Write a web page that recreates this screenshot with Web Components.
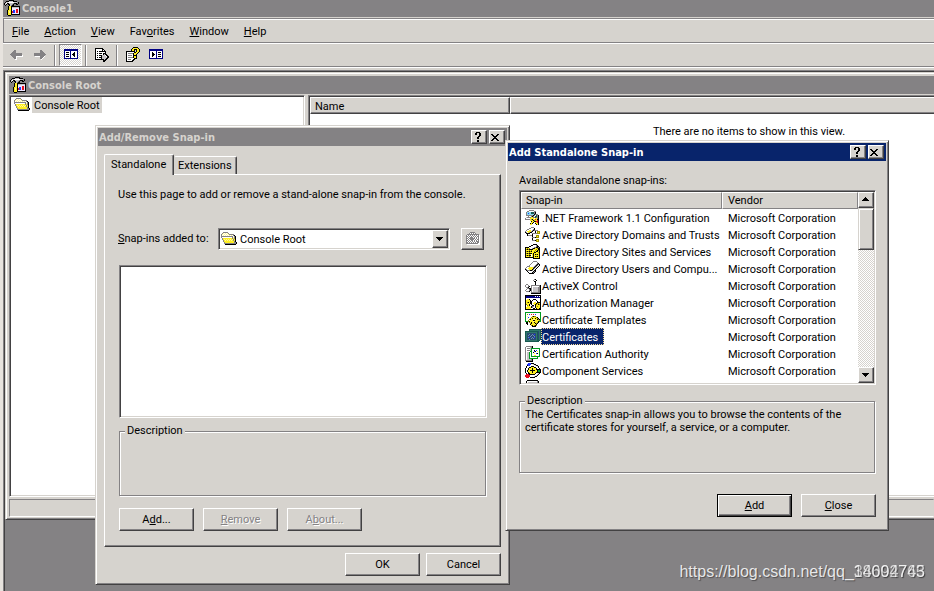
<!DOCTYPE html>
<html lang="en">
<head>
<meta charset="utf-8">
<title>Console1</title>
<style>
  html, body { margin: 0; height: 100%; overflow: hidden; }
  body {
    --face: #d6d3ce; --shade: #848284; --dark: #424142; --navy: #08246b;
    --title-font: bold 11px/16px "DejaVu Sans Condensed", "DejaVu Sans", sans-serif;
    font: 11px/14px Roboto, "Liberation Sans", sans-serif;
    color: #000; background: var(--shade);
  }
</style>
</head>
<body>
<management-console></management-console>

<script>
const PALETTE = { k:'#000', d:'#424142', g:'#848284', l:'#c6c3c6', w:'#fff', y:'#ffef21', o:'#9c9200', b:'#000084',
  B:'#2138ff', r:'#e71021', R:'#840000', G:'#009a21', t:'#185a52', c:'#84d7ef', n:'#294973', p:'#fff79c', v:'#efe7ff',
  e:'#31756b', s:'#6b8eb5' };

const ICONS = {
mmc: `
.....kkkkk......
..kkkllllkkkk...
.kllwwwwwwlllgk.
klwkkllllgkkkgk.
klk.kkllgk..kk..
.k...klgkk......
....kyykkkkkkkkk
....kyyklllllllk
....kyykvvvvvvvk
....kyykvvvvrrvk
...kyyykvBBvrrvk
...kypykrBBvrrvk
...kypykrBBvrrvk
...kyyykvvvvvvvk
...kyyykkkkkkkkk
....kkk.........`,
folder: `
................
..ggggg.........
.gpwpwpg........
gpwpwpwpggggg...
gwpwpwpwpwpwgk..
ggggggggggggwgk.
gwwwwwwwwwwgpgk.
.gyyyyyyyyygygk.
.gypypypypypgyk.
..gypypypypygyk.
..gyyyyyyyyyygk.
...gyyyyyyyyyggk
...ggggggggggggk
....kkkkkkkkkkk.
................
................`,
folderOff: `
................
.....ggggg......
....gwgwgwg.....
..gggggggggggg..
.gwgwgwgwgwgwgw.
.ggwgwgwgwgwggw.
.gwgwgggwgwgwgw.
.ggwggggggwgwgw.
.gwgwggggwgwggw.
.ggwgwggwgwgwgw.
.gwgwgwgwgwgggw.
.ggwgwgwgwgwggw.
.ggggggggggggww.
..wwwwwwwwwwwww.
................
................`,
back: `
................
................
................
.....gg.........
....ggg.........
...gggg.........
..ggggggggggg...
.gggggggggggg...
..gggggggggggw..
...ggggwwwwwww..
....gggw........
.....ggw........
......ww........
................
................
................`,
forward: `
................
................
................
........gg......
........ggg.....
........gggg....
..ggggggggggg...
..gggggggggggg..
..ggggggggggg...
...wwwwwggggw...
........gggw....
........ggw.....
.........w......
................
................
................`,
tree: `
................
................
.bbbbbbbbbbbbbb.
.bbbbbbbbbbbbbb.
.bwwwwwbwwwwwwb.
.bwkkkwbwwwkwwb.
.bwwwwwbwwkkwwb.
.bwkkkwbwkkkwwb.
.bwwwwwbwwkkwwb.
.bwkkkwbwwwkwwb.
.bwwwwwbwwwwwwb.
.bbbbbbbbbbbbbb.
................
................
................
................`,
action: `
................
................
.bbbbbbbbbbbbbb.
.bbbbbbbbbbbbbb.
.bwwwwwwbwwwwwb.
.bwwkwwwbwkkkwb.
.bwwkkwwbwwwwwb.
.bwwkkkwbwkkkwb.
.bwwkkwwbwwwwwb.
.bwwkwwwbwkkkwb.
.bwwwwwwbwwwwwb.
.bbbbbbbbbbbbbb.
................
................
................
................`,
exportList: `
................
.kkkkkkkk.......
.kwwwwwwkk......
.kwwwwwwkwk.....
.kwkwkkkkkkk....
.kwwwwwwwwwk....
.kwkwkkkwkkk....
.kwwwwwwwklkk...
.kwkwkkklllwkk..
.kwwwwwkllllwkk.
.kwkwkkklllllkk.
.kwwwwwkllllkk..
.kkkkkkkkklkk...
.........kkk....
.........kk.....
................`,
help: `
........kkkkk...
.......kyyyyyk..
......kyykkkyyk.
......kyyk.kyyk.
.kkkkkkkkk.kyyk.
.kwwwwwwwkkyyk..
.kwgggggkyyyk...
.kwwwwwwkyyk....
.kwggggwkkkk....
.kwwwwwwkyyk....
.kwgggggkyyk....
.kwwwwwwwkkk....
.kwgggwwkk......
.kwwwwwkk.......
.kkkkkkk........
................`,
net: `
....ggggg.......
..ggwwwwwgg.....
.gcccctttgk.....
.gcBcctttgk.....
.gccccccckggg...
.gggggggkgwtgk..
...gwwgkgwttgk..
.lggggyyggtggk..
gwwwwyyyywyygk..
gggggygkyyrykk..
.....yyykgyyrk..
......kyykkrrk..
......yyk.yyrk..
.....kyk..kyyk..
.....yy....kyk..
................`,
domains: `
......ggg.......
....ggwwwk......
..ggwwwwgk......
.gwwyywgkgggg...
gwyyyygk..k.ooo.
kgwygkk...k.oyo.
.kkkk..gggggooo.
..k....k........
..kggggk...ooo..
.......k...oyo..
.......gggkooo..
.......k........
.......k...ooo..
.......gggkoyo..
...........ooo..
................`,
sites: `
........kkkk....
......kkwwwgk...
....kkwwwwwgkk..
kkkkwwwwwggkkgk.
kyoyowwgkkyyokk.
kokokkkkyyyoykk.
kyyyoyoyyyoykok.
kokokokyyoykkyk.
kyyyoyyyykkyyok.
kokokkkykyyyyyk.
kyyyoywykykokyk.
kokokkwykyyyyyk.
kyyyoywykykokyk.
kkkkkkkkkyyyyyk.
........kkkkkkk.
................`,
users: `
........gggg....
.......gwwwwg...
......gwwwwwgk..
.....gwwwwwgkgk.
....gwwwwwgkgwk.
..gggwwwwgkgwk..
.gwwyyyygkgwk...
gwwyyyyykgwk....
kgwwyyykgwk.....
.kgggkkgwkk.....
..kwwwwwkgk.....
...kwwwkgk......
....kkkkk.......
................
................
................`,
activex: `
................
.........gk.....
........gwwk....
.........kk.....
..........k.....
..........k.....
.gg.......k.....
gwwg..gggggggggk
g.wgk.gwwwwwwwgk
.ggk..gwlllllggk
..ggkkgwlllllggk
.gwwgkgwlllllggk
gw.wgkgwlllllggk
.gggk.gwlllllggk
......gggggggggk
......kkkkkkkkkk`,
auth: `
kkkkkkkkkkkkkkkk
kbbbbbbbbbwbwbwk
kbbbbbbbbbbbbbbk
kwwwwwwwwwwwwwwk
kwyykwwwkkkwwwwk
kyyyykwkwwwkwwwk
kyyyykkwwwwwkwwk
kyokykkwwyywkkkk
kyyyykkwyyykooyk
koyykwkwwykoykok
kwoykwwkkwkyyyyk
kwyyywkggwkyoyyk
kyyyyykgwwkyyyyk
kyyyyywwkkwkyykk
kkkkkkkkkkkkkkkk
................`,
template: `
GGGGGGGGGGGGGGGG
GwwwwwwwwwwwwwwG
GwowBwrwrwBwwwwG
GwwwwwwwwwwwwwwG
GwpwwwwokoowwwwG
GwwBwwoyyyyokwwG
GwpwwoykyykyokwG
GwwwokyyppyykokG
GwwowyyykkyyyyoG
GGGokyyypyyyykGG
.kkwoykyykyyok..
.kkwwokyyykok...
..k..kyyyyyk....
......okyoko....
.......kkkk.....
................`,
cert: `
....tttttttttttt
....teeeeeeeeeet
tttttttttttttnet
teeeeeeeeeeetnet
tennnnnnnnnetnet
tennsnnsnBnetnet
tensnnsnsnnetnet
tennnsnnnsnetnet
tensBnnsnBnetnet
tennnnsnsnnetnet
tennsnnnnnnettet
teeeeeeeeeeettt.
tttttttttttttt..
................
................
................`,
ca: `
.ggggggk........
gwwwwlgk........
gwggglGGGGGGGGG.
gwwwwlGwwwwwwwG.
gwggglGwwkwBwwG.
gwwwwGGwwBkwywG.
gwllGwGwkwwwwwG.
gwllGwGwwywBkwG.
gwllGwGwwwwwwwG.
gwllGwGwwyywwwG.
gwllGwGGGGGGGGG.
gwllGwwwwwwwG...
gwllGGGGGGGGG...
gwllllgk........
gggggggk........
.kkkkkkk........`,
com: `
...BBBkkk.......
..BBBBwwlkk.....
..kBBwwwwwlkk...
.kwwwwkkkwwwlk..
.kwwkkyyykkwwk..
kwwkyyykyyykwwk.
kwwkyyykyyykkkkk
kwkyykkkkkyykGGk
kwkyyyykyyyykGGk
kwwkyyykyyykkkkk
.kwkkyyyyykwwlk.
.rrrkkkkkkwwlk..
rrrrrwwwwwwlk...
rrrrrwwwwlkk....
.rrr.kkkkk......
................`,
disk: `
..kkkkkkkkkkk...
.kwwwwwwwwwwgk..
.kwlllllllllgk..
.kggkkkkkkkggk..
.kwlllllllllgk..`,
question: `
................
......kkkk......
.....kk..kk.....
.....kk..kk.....
.........kk.....
........kk......
.......kk.......
.......kk.......
................
.......kk.......
.......kk.......`,
close: `
................
................
................
...kk....kk.....
....kk..kk......
.....kkkk.......
......kk........
.....kkkk.......
....kk..kk......
...kk....kk.....`,
down: `
................
................
................
................
................
................
....kkkkkkk.....
.....kkkkk......
......kkk.......
.......k........`,
up: `
................
................
................
................
................
.......k........
......kkk.......
.....kkkkk......
....kkkkkkk.....`
};

function pixelIcon(name) {
  const rows = ICONS[name].trim().split('\n');
  let out = '';
  rows.forEach((row, y) => {
    for (let x = 0; x < row.length;) {
      let n = 1;
      while (row[x + n] === row[x]) n++;
      if (PALETTE[row[x]]) out += `<rect x="${x}" y="${y}" width="${n}" height="1" fill="${PALETTE[row[x]]}"/>`;
      x += n;
    }
  });
  return `<svg viewBox="0 0 16 16" width="16" height="16" shape-rendering="crispEdges" aria-hidden="true">${out}</svg>`;
}

class Part extends HTMLElement {
  connectedCallback() {
    if (this.shadowRoot) return;
    const root = this.attachShadow({ mode: 'open' });
    root.innerHTML = `<style>*{box-sizing:border-box}:host{display:block;box-sizing:border-box}${this.css || ''}</style>${this.html()}`;
  }
}
const define = (name, css, html) => customElements.define(name, class extends Part {
  get css() { return css; }
  html() { return html(this); }
});

define('px-icon', `:host{width:16px;height:16px;flex:none} svg{display:block}`, el => pixelIcon(el.getAttribute('name')));

define('push-button', `
  :host{width:75px;height:23px;flex:none}
  button{display:flex;align-items:center;justify-content:center;width:100%;height:100%;margin:0;padding:0;font:inherit;color:#000;
    background:var(--face);border:1px solid;border-color:#fff var(--dark) var(--dark) #fff;box-shadow:inset -1px -1px var(--shade)}
  :host([default]) button{border-color:#000;box-shadow:inset 1px 1px #fff,inset -1px -1px var(--dark),inset -2px -2px var(--shade)}
  button:disabled{color:var(--shade);text-shadow:1px 1px #fff}
  :host([small]){width:16px;height:14px}
  :host([square]){width:16px;height:16px}
  :host([tool]){width:23px;height:22px}
  :host([small]) button{align-items:flex-start;overflow:hidden}
  ::slotted(px-icon){flex:none}`,
  el => `<button type="button" ${el.hasAttribute('disabled') ? 'disabled' : ''} aria-label="${el.getAttribute('label') || ''}"><span><slot></slot></span></button>`
    .replace(' aria-label=""', ''));

define('title-bar', `
  :host{height:18px;background:var(--bar,var(--shade));color:var(--bar-text,var(--face))}
  header{display:flex;align-items:center;height:100%;padding:0 2px 0 1px;font:var(--title-font)}
  h1{flex:1;margin:0;padding-top:2px;font:inherit}
  px-icon{margin-right:2px}
  push-button+push-button{margin-left:2px}`,
  el => `<header>${el.hasAttribute('icon') ? `<px-icon name="${el.getAttribute('icon')}"></px-icon>` : ''}<h1><slot></slot></h1>${
    el.hasAttribute('buttons') ? '<push-button small label="Help"><px-icon name="question"></px-icon></push-button><push-button small label="Close"><px-icon name="close"></px-icon></push-button>' : ''}</header>`);

define('dialog-window', `
  :host{position:absolute;background:var(--face);border:1px solid;border-color:var(--face) var(--dark) var(--dark) var(--face);
    box-shadow:inset 1px 1px #fff,inset -1px -1px var(--shade);padding:2px}
  :host([active]){--bar:var(--navy);--bar-text:#fff}`,
  el => `<title-bar buttons>${el.getAttribute('heading')}</title-bar><slot></slot>`);

define('group-box', `
  :host{padding:0 1px 1px 0}
  fieldset{height:100%;margin:0;padding:0 5px;border:1px solid var(--shade);box-shadow:1px 1px #fff,inset 1px 1px #fff;min-width:0}
  legend{padding:0 2px;line-height:14px;background:var(--face)}
  p{margin:0;line-height:13px}`,
  () => `<fieldset><legend>Description</legend><p><slot></slot></p></fieldset>`);

define('menu-bar', `
  nav{display:flex;gap:15px;height:23px;padding:0 8px;align-items:center;border-top:1px solid #fff}
  button{font:inherit;color:#000;background:none;border:0;padding:2px 0 0}`,
  () => `<nav><button><u>F</u>ile</button><button><u>A</u>ction</button><button><u>V</u>iew</button><button>Fav<u>o</u>rites</button><button><u>W</u>indow</button><button><u>H</u>elp</button></nav>`);

define('tool-bar', `
  div{display:flex;align-items:flex-end;height:25px;padding-left:2px;border:solid;border-width:1px 0;border-color:var(--shade);box-shadow:inset 0 1px #fff}
  button{display:flex;align-items:center;justify-content:center;width:23px;height:22px;padding:0;background:none;border:1px solid transparent}
  .on{background:repeating-conic-gradient(#fff 0 25%,var(--face) 0 50%) 0 0/2px 2px;border-color:var(--shade) #fff #fff var(--shade)}
  i{width:2px;height:21px;margin:0 3px;background:linear-gradient(90deg,var(--shade) 50%,#fff 50%)}`,
  () => {
    const b = (n, l, c = '') => `<button class="${c}" aria-label="${l}"><px-icon name="${n}"></px-icon></button>`;
    return `<div>${b('back','Back')}${b('forward','Forward')}<i></i>${b('tree','Show console tree','on')}<i></i>${b('exportList','Export list')}<i></i>${b('help','Help')}${b('action','Show action pane')}</div>`;
  });

define('child-window', `
  :host{display:flex;flex-direction:column;flex:1;min-height:0;padding:3px 0 1px 3px;background:var(--face);border-left:1px solid var(--face);
    border-top:1px solid var(--face);border-bottom:1px solid var(--dark);box-shadow:inset 1px 1px #fff,inset 0 -1px var(--shade)}
  .panes{display:flex;flex:1;min-height:0;gap:3px;padding-top:1px}
  .pane{background:#fff;border:1px solid;border-color:var(--shade) #fff #fff var(--shade);box-shadow:inset 1px 1px var(--dark),inset -1px -1px var(--face)}
  .tree{flex:0 0 296px;padding:1px 4px}
  .items{flex:1;border-right:0;padding:1px 0 0 1px;box-shadow:inset 1px 1px var(--dark),inset 0 -1px var(--face)}
  ul{margin:0;padding:0;list-style:none}
  li{display:flex;align-items:center;gap:2px;height:16px}
  li span{background:var(--face);padding:2px 2px 0}
  table{width:100%;border-collapse:separate;border-spacing:0}
  th{height:17px;padding:1px 4px 0;line-height:13px;text-align:left;font-weight:normal;background:var(--face);border:1px solid;border-color:#fff var(--dark) var(--dark) #fff;box-shadow:inset -1px -1px var(--shade)}
  th:first-child{width:200px}
  th:last-child{border-right:0;box-shadow:inset 0 -1px var(--shade)}
  td{padding:11px 0 0;text-align:center}
  td span{padding-left:254px}
  .status{height:18px;margin:2px 0 1px;border:1px solid;border-color:var(--shade) transparent #fff var(--shade)}`,
  () => `<title-bar icon="mmc">Console Root</title-bar>
    <div class="panes"><div class="pane tree"><ul><li><px-icon name="folder"></px-icon><span>Console Root</span></li></ul></div>
    <div class="pane items"><table><thead><tr><th>Name</th><th></th></tr></thead><tbody><tr><td colspan="2"><span>There are no items to show in this view.</span></td></tr></tbody></table></div></div>
    <div class="status"></div>`);

define('tab-panel', `
  .tabs{display:flex;align-items:flex-end;height:20px}
  .tabs button{position:relative;width:63px;height:18px;padding:0 0 0 3px;font:inherit;color:#000;background:var(--face);border:1px solid;border-color:#fff var(--dark) transparent transparent;border-bottom:0;
    border-radius:2px 2px 0 0;box-shadow:inset -1px 0 var(--shade);text-align:left}
  .tabs button[aria-selected=true]{width:70px;height:21px;margin-bottom:-1px;padding:0 0 0 6px;border-left-color:#fff}
  .panel{padding:13px 13px 15px 14px;border:1px solid;border-color:#fff var(--dark) var(--dark) #fff;box-shadow:inset -1px -1px var(--shade)}`,
  () => `<div class="tabs" role="tablist"><button role="tab" aria-selected="true">Standalone</button><button role="tab" aria-selected="false">Extensions</button></div><div class="panel" role="tabpanel"><slot></slot></div>`);

define('folder-select', `
  :host{display:flex;align-items:center}
  label{flex:0 0 100px;margin-left:-1px}
  .box{position:relative;flex:1;height:22px}
  select{appearance:none;width:100%;height:100%;margin:0;padding:2px 20px 0 21px;font:inherit;color:#000;background:#fff;border:1px solid;border-color:var(--shade) #fff #fff var(--shade);border-radius:0;
    box-shadow:inset 1px 1px var(--dark),inset -1px -1px var(--face)}
  .box > px-icon{position:absolute;left:3px;top:3px;pointer-events:none}
  .box push-button{position:absolute;right:2px;top:2px;height:18px;pointer-events:none}
  .tool{margin:0 3px 0 11px}`,
  () => `<label for="where"><u>S</u>nap-ins added to:</label><div class="box"><select id="where"><option>Console Root</option></select><px-icon name="folder"></px-icon><push-button square label="Open list"><px-icon name="down"></px-icon></push-button></div>
    <push-button class="tool" tool disabled label="Up one level"><px-icon name="folderOff"></px-icon></push-button>`);

define('scroll-bar', `
  :host{display:flex;flex-direction:column;flex:0 0 16px;background:repeating-conic-gradient(#fff 0 25%,var(--face) 0 50%) 0 0/2px 2px}
  .thumb{height:42px;background:var(--face);border:1px solid;border-color:var(--face) var(--dark) var(--dark) var(--face);box-shadow:inset 1px 1px #fff,inset -1px -1px var(--shade)}
  .gap{flex:1}`,
  () => `<push-button square label="Scroll up"><px-icon name="up"></px-icon></push-button><div class="thumb"></div><div class="gap"></div><push-button square label="Scroll down"><px-icon name="down"></px-icon></push-button>`);

const SNAPINS = [['net','.NET Framework 1.1 Configuration'],['domains','Active Directory Domains and Trusts'],['sites','Active Directory Sites and Services'],
  ['users','Active Directory Users and Compu...'],['activex','ActiveX Control'],['auth','Authorization Manager'],['template','Certificate Templates'],
  ['cert','Certificates'],['ca','Certification Authority'],['com','Component Services'],['disk','']];

define('snapin-list', `
  :host{display:flex;height:195px;padding:1px;background:#fff;border:1px solid;border-color:var(--shade) #fff #fff var(--shade);box-shadow:inset 1px 1px var(--dark),inset -1px -1px var(--face)}
  .view{flex:1;overflow:hidden}
  table{width:100%;table-layout:fixed;border-collapse:separate;border-spacing:0}
  th{height:17px;padding:1px 5px 0 4px;text-align:left;font-weight:normal;background:var(--face);border:1px solid;border-color:#fff var(--shade) var(--shade) #fff}
  th+th{padding-left:5px}
  th:first-child{width:201px}
  td{height:17px;padding:2px 0 0 6px;line-height:15px;white-space:nowrap}
  td:first-child{padding:0 0 0 4px}
  td div{display:flex;align-items:center;height:17px}
  td span{padding:2px 1px 0;line-height:15px}
  .sel span{color:#fff;background:var(--navy);outline:1px dotted #f7db94;outline-offset:-1px;padding-right:6px}`,
  () => `<div class="view"><table><thead><tr><th>Snap-in</th><th>Vendor</th></tr></thead><tbody>${SNAPINS.map(([i, t]) =>
    `<tr class="${i === 'cert' ? 'sel' : ''}"><td><div><px-icon name="${i}"></px-icon>${t ? `<span>${t}</span>` : ''}</div></td><td>${t ? 'Microsoft Corporation' : ''}</td></tr>`).join('')}</tbody></table></div><scroll-bar></scroll-bar>`);

define('remove-snapin-dialog', `
  :host{display:contents}
  dialog-window{left:95px;top:125px;width:415px}
  .body{padding:8px 6px 6px}
  p{margin:0 0 26px -1px}
  .list{height:153px;margin:15px 0 6px;background:#fff;border:1px solid;border-color:var(--shade) #fff #fff var(--shade);box-shadow:inset 1px 1px var(--dark),inset -1px -1px var(--face)}
  group-box{height:73px;margin-bottom:11px}
  .row{display:flex;gap:9px}
  .end{gap:6px;justify-content:flex-end;margin-top:6px}`,
  () => `<dialog-window heading="Add/Remove Snap-in"><div class="body"><tab-panel><p>Use this page to add or remove a stand-alone snap-in from the console.</p>
    <folder-select></folder-select><div class="list"></div><group-box></group-box>
    <div class="row"><push-button>A<u>d</u>d...</push-button><push-button disabled><u>R</u>emove</push-button><push-button disabled>A<u>b</u>out...</push-button></div></tab-panel>
    <div class="row end"><push-button>OK</push-button><push-button>Cancel</push-button></div></div></dialog-window>`);

define('add-snapin-dialog', `
  :host{display:contents}
  dialog-window{left:505px;top:140px;width:384px}
  .body{padding:13px 10px 11px 11px}
  p{margin:0 0 2px}
  group-box{height:80px;margin:9px 0 20px}
  .row{display:flex;gap:9px;justify-content:flex-end}`,
  () => `<dialog-window active heading="Add Standalone Snap-in"><div class="body"><p>Available standalone snap-ins:</p><snapin-list></snapin-list>
    <group-box>The Certificates snap-in allows you to browse the contents of the<br>certificate stores for yourself, a service, or a computer.</group-box>
    <div class="row"><push-button default><u>A</u>dd</push-button><push-button><u>C</u>lose</push-button></div></div></dialog-window>`);

define('water-mark', `
  :host{position:absolute;right:9px;bottom:9px;font:16px/20px "Liberation Sans",sans-serif;color:#ffffffd9;text-shadow:1px 1px 1px #0006}
  .ids{display:inline-grid}
  .ids span{grid-area:1/1;opacity:.8}`,
  () => `https://blog.csdn.net/qq_<span class="ids"><span>38692765</span><span>14004743</span></span>`);

define('management-console', `
  :host{position:relative;display:flex;flex-direction:column;height:100vh;background:var(--face);border-left:3px solid #e7e3de;overflow:hidden}
  .top{height:17px;overflow:hidden}
  .top title-bar{margin-top:-1px}
  menu-bar{margin-top:1px;border-top:1px solid var(--shade);border-left:1px solid var(--shade)}
  tool-bar{border-bottom:1px solid #fff}
  .space{display:flex;flex:1;min-height:0;margin:3px 0 0 1px;padding:0 0 71px;background:var(--shade);border:solid var(--dark);border-width:1px 0 0 1px;outline:1px solid var(--shade)}
  .over{position:absolute;inset:0 0 0 -3px}`,
  () => `<div class="top"><title-bar icon="mmc">Console1</title-bar></div><menu-bar></menu-bar><tool-bar></tool-bar>
    <div class="space"><child-window></child-window></div>
    <div class="over"><remove-snapin-dialog></remove-snapin-dialog><add-snapin-dialog></add-snapin-dialog><water-mark></water-mark></div>`);
</script>
</body>
</html>
